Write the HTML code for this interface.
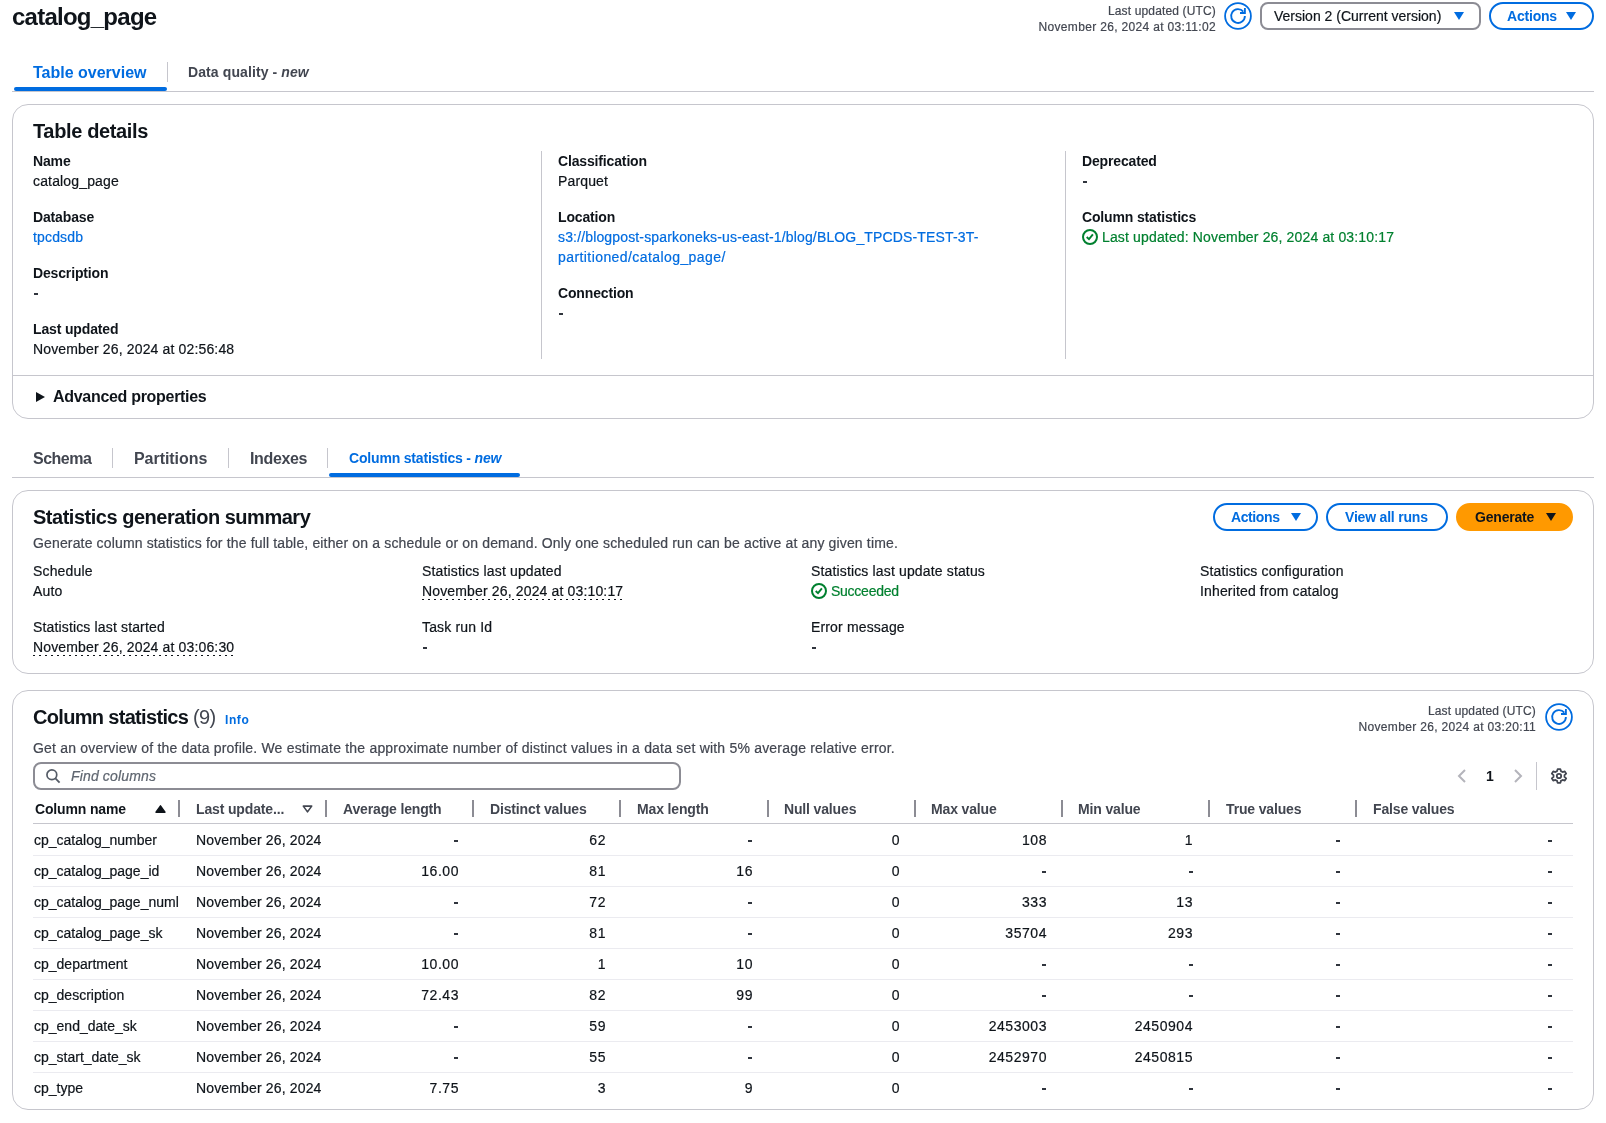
<!DOCTYPE html>
<html><head><meta charset="utf-8">
<style>
*{box-sizing:border-box;margin:0;padding:0}
html,body{width:1606px;height:1123px;overflow:hidden;background:#fff}
body{font-family:"Liberation Sans",sans-serif;color:#0f141a;font-size:14px;line-height:20px;position:relative;letter-spacing:0.15px}
#wrap{position:absolute;left:0;top:0;width:1606px;height:1123px;will-change:transform;-webkit-text-stroke:0.2px currentColor}
.a{position:absolute;white-space:nowrap}
.b{font-weight:bold;letter-spacing:-0.15px;-webkit-text-stroke:0}
.btn,.th{-webkit-text-stroke:0}
.lnk{color:#006ce0}
.grey{color:#424650}
.green{color:#00802f}
.cont{position:absolute;left:12px;width:1582px;border:1px solid #c6c6cd;border-radius:16px;background:#fff}
.vsep{position:absolute;width:1px;background:#c6c6cd}
.hline{position:absolute;height:1px;background:#c6c6cd}
.btn{position:absolute;border:2px solid #006ce0;border-radius:20px;color:#006ce0;font-weight:bold;font-size:14px;line-height:20px;white-space:nowrap;letter-spacing:-0.2px}
.btn span{position:absolute;top:2px}
.tri{position:absolute;width:0;height:0;border-left:5.5px solid transparent;border-right:5.5px solid transparent;border-top:8px solid #006ce0}
.dot{height:20px;background-image:repeating-linear-gradient(90deg,#0f141a 0 2px,transparent 2px 6px);background-size:100% 1px;background-repeat:no-repeat;background-position:0 18px}
.th{position:absolute;top:799px;font-weight:bold;color:#424650;white-space:nowrap;letter-spacing:-0.15px}
.ts{position:absolute;top:800px;width:2px;height:17px;background:#8c8c94}
.rs{position:absolute;left:33px;width:1540px;height:1px;background:#ebebf0}
.r{position:absolute;white-space:nowrap;text-align:right;letter-spacing:0.55px}
.dash{position:absolute;width:4px;height:2px;background:#30353d}
</style></head><body><div id="wrap">

<!-- ================= header ================= -->
<div class="a b" style="left:12px;top:2px;font-size:24px;line-height:30px;letter-spacing:-0.75px">catalog_page</div>
<div class="a grey" style="right:390px;top:3px;font-size:12px;line-height:16px;text-align:right">Last updated (UTC)<br><span style="letter-spacing:0.33px">November 26, 2024 at 03:11:02</span></div>
<svg class="a" style="left:1224px;top:2px" width="28" height="28" viewBox="0 0 28 28">
  <circle cx="14" cy="14" r="12.9" fill="none" stroke="#006ce0" stroke-width="1.8"/>
  <path d="M20.9 14 A6.9 6.9 0 1 1 19.3 9.6" fill="none" stroke="#006ce0" stroke-width="1.85"/>
  <path d="M16 11 H20.9 V6" fill="none" stroke="#006ce0" stroke-width="1.85" stroke-linejoin="miter"/>
</svg>
<div class="a" style="left:1260px;top:2px;width:221px;height:28px;border:2px solid #8c8c94;border-radius:8px"></div>
<div class="a" style="left:1274px;top:6px;letter-spacing:0">Version 2 (Current version)</div>
<div class="tri" style="left:1454px;top:12px"></div>
<div class="btn" style="left:1489px;top:2px;width:105px;height:28px"><span style="left:16px">Actions</span></div>
<div class="tri" style="left:1566px;top:12px"></div>

<!-- ================= tabs 1 ================= -->
<div class="a b lnk" style="left:33px;top:63px;font-size:16px;line-height:20px;letter-spacing:0px">Table overview</div>
<div class="vsep" style="left:167px;top:62px;height:20px"></div>
<div class="a b grey" style="left:188px;top:62px;letter-spacing:0.1px">Data quality - <i>new</i></div>
<div class="hline" style="left:12px;top:91px;width:1582px"></div>
<div class="a" style="left:14px;top:87px;width:153px;height:4px;border-radius:2px;background:#006ce0"></div>

<!-- ================= container 1 ================= -->
<div class="cont" style="top:104px;height:315px"></div>
<div class="a b" style="left:33px;top:119px;font-size:20px;line-height:24px;letter-spacing:-0.36px">Table details</div>

<div class="a b" style="left:33px;top:151px">Name</div>
<div class="a" style="left:33px;top:171px">catalog_page</div>
<div class="a b" style="left:33px;top:207px">Database</div>
<div class="a lnk" style="left:33px;top:227px">tpcdsdb</div>
<div class="a b" style="left:33px;top:263px">Description</div>
<div class="dash" style="left:34px;top:293px"></div>
<div class="a b" style="left:33px;top:319px">Last updated</div>
<div class="a" style="left:33px;top:339px">November 26, 2024 at 02:56:48</div>

<div class="vsep" style="left:541px;top:151px;height:208px"></div>
<div class="a b" style="left:558px;top:151px">Classification</div>
<div class="a" style="left:558px;top:171px">Parquet</div>
<div class="a b" style="left:558px;top:207px">Location</div>
<div class="a lnk" style="left:558px;top:227px">s3://blogpost-sparkoneks-us-east-1/blog/BLOG_TPCDS-TEST-3T-<br><span style="letter-spacing:0.42px">partitioned/catalog_page/</span></div>
<div class="a b" style="left:558px;top:283px">Connection</div>
<div class="dash" style="left:559px;top:313px"></div>

<div class="vsep" style="left:1065px;top:151px;height:208px"></div>
<div class="a b" style="left:1082px;top:151px">Deprecated</div>
<div class="dash" style="left:1083px;top:181px"></div>
<div class="a b" style="left:1082px;top:207px">Column statistics</div>
<svg class="a" style="left:1082px;top:229px" width="16" height="16" viewBox="0 0 16 16">
  <circle cx="8" cy="8" r="7" fill="none" stroke="#00802f" stroke-width="2"/>
  <path d="M4.7 8 L7 10.2 L10.9 5.4" fill="none" stroke="#00802f" stroke-width="1.9"/>
</svg>
<div class="a green" style="left:1102px;top:227px">Last updated: November 26, 2024 at 03:10:17</div>

<div class="hline" style="left:13px;top:375px;width:1580px"></div>
<div class="a" style="left:36px;top:392px;width:0;height:0;border-top:5px solid transparent;border-bottom:5px solid transparent;border-left:9px solid #0f141a"></div>
<div class="a b" style="left:53px;top:387px;font-size:16px;line-height:20px;letter-spacing:-0.3px">Advanced properties</div>

<!-- ================= tabs 2 ================= -->
<div class="a b grey" style="left:33px;top:449px;font-size:16px;line-height:20px;letter-spacing:-0.5px">Schema</div>
<div class="vsep" style="left:112px;top:448px;height:20px"></div>
<div class="a b grey" style="left:134px;top:449px;font-size:16px;line-height:20px;letter-spacing:-0.05px">Partitions</div>
<div class="vsep" style="left:228px;top:448px;height:20px"></div>
<div class="a b grey" style="left:250px;top:449px;font-size:16px;line-height:20px;letter-spacing:-0.37px">Indexes</div>
<div class="vsep" style="left:327px;top:448px;height:20px"></div>
<div class="a b lnk" style="left:349px;top:448px;letter-spacing:-0.18px">Column statistics - <i>new</i></div>
<div class="hline" style="left:12px;top:477px;width:1582px"></div>
<div class="a" style="left:329px;top:473px;width:191px;height:4px;border-radius:2px;background:#006ce0"></div>

<!-- ================= container 2 ================= -->
<div class="cont" style="top:490px;height:184px"></div>
<div class="a b" style="left:33px;top:505px;font-size:20px;line-height:24px;letter-spacing:-0.48px">Statistics generation summary</div>
<div class="a grey" style="left:33px;top:533px">Generate column statistics for the full table, either on a schedule or on demand. Only one scheduled run can be active at any given time.</div>

<div class="btn" style="left:1213px;top:503px;width:105px;height:28px"><span style="left:16px;letter-spacing:-0.4px">Actions</span></div>
<div class="tri" style="left:1291px;top:513px"></div>
<div class="btn" style="left:1326px;top:503px;width:122px;height:28px"><span style="left:17px">View all runs</span></div>
<div class="btn" style="left:1456px;top:503px;width:117px;height:28px;background:#ff9900;border-color:#ff9900;color:#0f141a"><span style="left:17px">Generate</span></div>
<div class="tri" style="left:1546px;top:513px;border-top-color:#0f141a"></div>

<div class="a" style="left:33px;top:561px">Schedule</div>
<div class="a" style="left:33px;top:581px">Auto</div>
<div class="a" style="left:33px;top:617px">Statistics last started</div>
<div class="a dot" style="left:33px;top:637px">November 26, 2024 at 03:06:30</div>

<div class="a" style="left:422px;top:561px">Statistics last updated</div>
<div class="a dot" style="left:422px;top:581px">November 26, 2024 at 03:10:17</div>
<div class="a" style="left:422px;top:617px">Task run Id</div>
<div class="dash" style="left:423px;top:647px"></div>

<div class="a" style="left:811px;top:561px">Statistics last update status</div>
<svg class="a" style="left:811px;top:583px" width="16" height="16" viewBox="0 0 16 16">
  <circle cx="8" cy="8" r="7" fill="none" stroke="#00802f" stroke-width="2"/>
  <path d="M4.7 8 L7 10.2 L10.9 5.4" fill="none" stroke="#00802f" stroke-width="1.9"/>
</svg>
<div class="a green" style="left:831px;top:581px;letter-spacing:-0.25px">Succeeded</div>
<div class="a" style="left:811px;top:617px">Error message</div>
<div class="dash" style="left:812px;top:647px"></div>

<div class="a" style="left:1200px;top:561px">Statistics configuration</div>
<div class="a" style="left:1200px;top:581px">Inherited from catalog</div>

<!-- ================= container 3 ================= -->
<div class="cont" style="top:690px;height:420px"></div>
<div class="a b" style="left:33px;top:705px;font-size:20px;line-height:24px;letter-spacing:-0.68px">Column statistics <span class="grey" style="font-weight:normal">(9)</span></div>
<div class="a b lnk" style="left:225px;top:712px;font-size:12px;line-height:16px;letter-spacing:0.6px">Info</div>
<div class="a grey" style="right:70px;top:703px;font-size:12px;line-height:16px;text-align:right">Last updated (UTC)<br><span style="letter-spacing:0.33px">November 26, 2024 at 03:20:11</span></div>
<svg class="a" style="left:1545px;top:703px" width="28" height="28" viewBox="0 0 28 28">
  <circle cx="14" cy="14" r="12.9" fill="none" stroke="#006ce0" stroke-width="1.8"/>
  <path d="M20.9 14 A6.9 6.9 0 1 1 19.3 9.6" fill="none" stroke="#006ce0" stroke-width="1.85"/>
  <path d="M16 11 H20.9 V6" fill="none" stroke="#006ce0" stroke-width="1.85" stroke-linejoin="miter"/>
</svg>
<div class="a grey" style="left:33px;top:738px;letter-spacing:0.2px">Get an overview of the data profile. We estimate the approximate number of distinct values in a data set with 5% average relative error.</div>

<div class="a" style="left:33px;top:762px;width:648px;height:28px;border:2px solid #8c8c94;border-radius:8px"></div>
<svg class="a" style="left:45px;top:769px" width="16" height="16" viewBox="0 0 16 16">
  <circle cx="6.85" cy="5.8" r="4.9" fill="none" stroke="#545b66" stroke-width="1.7"/>
  <path d="M10.4 9.4 L14.6 13.6" stroke="#545b66" stroke-width="1.8"/>
</svg>
<div class="a" style="left:71px;top:766px;font-style:italic;color:#5f6670">Find columns</div>

<svg class="a" style="left:1456px;top:768px" width="12" height="16" viewBox="0 0 12 16">
  <path d="M9 2 L3 8 L9 14" fill="none" stroke="#b4b4bb" stroke-width="2"/>
</svg>
<div class="a b" style="left:1486px;top:766px">1</div>
<svg class="a" style="left:1512px;top:768px" width="12" height="16" viewBox="0 0 12 16">
  <path d="M3 2 L9 8 L3 14" fill="none" stroke="#b4b4bb" stroke-width="2"/>
</svg>
<div class="vsep" style="left:1536px;top:762px;height:28px"></div>
<svg class="a" style="left:1550px;top:767px" width="18" height="18" viewBox="0 0 18 18">
  <path d="M7.6 2.1 h2.8 l0.5 2.02 l1.7 0.92 l2.2 -0.64 l1.4 2.21 l-1.7 1.47 v1.84 l1.7 1.47 l-1.4 2.21 l-2.2 -0.64 l-1.7 0.92 l-0.5 2.02 h-2.8 l-0.5 -2.02 l-1.7 -0.92 l-2.2 0.64 l-1.4 -2.21 l1.7 -1.47 v-1.84 l-1.7 -1.47 l1.4 -2.21 l2.2 0.64 l1.7 -0.92 z" fill="none" stroke="#424650" stroke-width="1.8" stroke-linejoin="round"/>
  <circle cx="9" cy="9" r="2.2" fill="none" stroke="#424650" stroke-width="1.8"/>
</svg>

<!-- table header -->
<div class="th" style="left:35px;color:#0f141a">Column name</div>
<svg class="a" style="left:154px;top:804px" width="13" height="10" viewBox="0 0 13 10"><path d="M2 8.2 L6.5 1.8 L11 8.2 Z" fill="#0f141a" stroke="#0f141a" stroke-width="1.4" stroke-linejoin="round"/></svg>
<div class="ts" style="left:178px"></div>
<div class="th" style="left:196px">Last update...</div>
<svg class="a" style="left:302px;top:805px" width="11" height="9" viewBox="0 0 11 9"><path d="M1.3 1.1 H9.7 L5.5 6.9 Z" fill="none" stroke="#424650" stroke-width="1.6" stroke-linejoin="round"/></svg>
<div class="ts" style="left:325px"></div>
<div class="th" style="left:343px">Average length</div>
<div class="ts" style="left:472px"></div>
<div class="th" style="left:490px">Distinct values</div>
<div class="ts" style="left:619px"></div>
<div class="th" style="left:637px">Max length</div>
<div class="ts" style="left:767px"></div>
<div class="th" style="left:784px">Null values</div>
<div class="ts" style="left:914px"></div>
<div class="th" style="left:931px">Max value</div>
<div class="ts" style="left:1061px"></div>
<div class="th" style="left:1078px">Min value</div>
<div class="ts" style="left:1208px"></div>
<div class="th" style="left:1226px">True values</div>
<div class="ts" style="left:1355px"></div>
<div class="th" style="left:1373px">False values</div>
<div class="a" style="left:33px;top:823px;width:1540px;height:1px;background:#c6c6cd"></div>

<div id="rows">
<div class="a" style="left:34px;top:830px;width:146px;overflow:hidden;letter-spacing:0">cp_catalog_number</div>
<div class="a" style="left:196px;top:830px">November 26, 2024</div>
<div class="dash" style="left:454px;top:840px"></div>
<div class="r" style="right:1000px;top:830px">62</div>
<div class="dash" style="left:748px;top:840px"></div>
<div class="r" style="right:706px;top:830px">0</div>
<div class="r" style="right:559px;top:830px">108</div>
<div class="r" style="right:413px;top:830px">1</div>
<div class="dash" style="left:1336px;top:840px"></div>
<div class="dash" style="left:1548px;top:840px"></div>
<div class="rs" style="top:855px"></div>
<div class="a" style="left:34px;top:861px;width:146px;overflow:hidden;letter-spacing:0">cp_catalog_page_id</div>
<div class="a" style="left:196px;top:861px">November 26, 2024</div>
<div class="r" style="right:1147px;top:861px">16.00</div>
<div class="r" style="right:1000px;top:861px">81</div>
<div class="r" style="right:853px;top:861px">16</div>
<div class="r" style="right:706px;top:861px">0</div>
<div class="dash" style="left:1042px;top:871px"></div>
<div class="dash" style="left:1189px;top:871px"></div>
<div class="dash" style="left:1336px;top:871px"></div>
<div class="dash" style="left:1548px;top:871px"></div>
<div class="rs" style="top:886px"></div>
<div class="a" style="left:34px;top:892px;width:146px;overflow:hidden;letter-spacing:0">cp_catalog_page_numl</div>
<div class="a" style="left:196px;top:892px">November 26, 2024</div>
<div class="dash" style="left:454px;top:902px"></div>
<div class="r" style="right:1000px;top:892px">72</div>
<div class="dash" style="left:748px;top:902px"></div>
<div class="r" style="right:706px;top:892px">0</div>
<div class="r" style="right:559px;top:892px">333</div>
<div class="r" style="right:413px;top:892px">13</div>
<div class="dash" style="left:1336px;top:902px"></div>
<div class="dash" style="left:1548px;top:902px"></div>
<div class="rs" style="top:917px"></div>
<div class="a" style="left:34px;top:923px;width:146px;overflow:hidden;letter-spacing:0">cp_catalog_page_sk</div>
<div class="a" style="left:196px;top:923px">November 26, 2024</div>
<div class="dash" style="left:454px;top:933px"></div>
<div class="r" style="right:1000px;top:923px">81</div>
<div class="dash" style="left:748px;top:933px"></div>
<div class="r" style="right:706px;top:923px">0</div>
<div class="r" style="right:559px;top:923px">35704</div>
<div class="r" style="right:413px;top:923px">293</div>
<div class="dash" style="left:1336px;top:933px"></div>
<div class="dash" style="left:1548px;top:933px"></div>
<div class="rs" style="top:948px"></div>
<div class="a" style="left:34px;top:954px;width:146px;overflow:hidden;letter-spacing:0">cp_department</div>
<div class="a" style="left:196px;top:954px">November 26, 2024</div>
<div class="r" style="right:1147px;top:954px">10.00</div>
<div class="r" style="right:1000px;top:954px">1</div>
<div class="r" style="right:853px;top:954px">10</div>
<div class="r" style="right:706px;top:954px">0</div>
<div class="dash" style="left:1042px;top:964px"></div>
<div class="dash" style="left:1189px;top:964px"></div>
<div class="dash" style="left:1336px;top:964px"></div>
<div class="dash" style="left:1548px;top:964px"></div>
<div class="rs" style="top:979px"></div>
<div class="a" style="left:34px;top:985px;width:146px;overflow:hidden;letter-spacing:0">cp_description</div>
<div class="a" style="left:196px;top:985px">November 26, 2024</div>
<div class="r" style="right:1147px;top:985px">72.43</div>
<div class="r" style="right:1000px;top:985px">82</div>
<div class="r" style="right:853px;top:985px">99</div>
<div class="r" style="right:706px;top:985px">0</div>
<div class="dash" style="left:1042px;top:995px"></div>
<div class="dash" style="left:1189px;top:995px"></div>
<div class="dash" style="left:1336px;top:995px"></div>
<div class="dash" style="left:1548px;top:995px"></div>
<div class="rs" style="top:1010px"></div>
<div class="a" style="left:34px;top:1016px;width:146px;overflow:hidden;letter-spacing:0">cp_end_date_sk</div>
<div class="a" style="left:196px;top:1016px">November 26, 2024</div>
<div class="dash" style="left:454px;top:1026px"></div>
<div class="r" style="right:1000px;top:1016px">59</div>
<div class="dash" style="left:748px;top:1026px"></div>
<div class="r" style="right:706px;top:1016px">0</div>
<div class="r" style="right:559px;top:1016px">2453003</div>
<div class="r" style="right:413px;top:1016px">2450904</div>
<div class="dash" style="left:1336px;top:1026px"></div>
<div class="dash" style="left:1548px;top:1026px"></div>
<div class="rs" style="top:1041px"></div>
<div class="a" style="left:34px;top:1047px;width:146px;overflow:hidden;letter-spacing:0">cp_start_date_sk</div>
<div class="a" style="left:196px;top:1047px">November 26, 2024</div>
<div class="dash" style="left:454px;top:1057px"></div>
<div class="r" style="right:1000px;top:1047px">55</div>
<div class="dash" style="left:748px;top:1057px"></div>
<div class="r" style="right:706px;top:1047px">0</div>
<div class="r" style="right:559px;top:1047px">2452970</div>
<div class="r" style="right:413px;top:1047px">2450815</div>
<div class="dash" style="left:1336px;top:1057px"></div>
<div class="dash" style="left:1548px;top:1057px"></div>
<div class="rs" style="top:1072px"></div>
<div class="a" style="left:34px;top:1078px;width:146px;overflow:hidden;letter-spacing:0">cp_type</div>
<div class="a" style="left:196px;top:1078px">November 26, 2024</div>
<div class="r" style="right:1147px;top:1078px">7.75</div>
<div class="r" style="right:1000px;top:1078px">3</div>
<div class="r" style="right:853px;top:1078px">9</div>
<div class="r" style="right:706px;top:1078px">0</div>
<div class="dash" style="left:1042px;top:1088px"></div>
<div class="dash" style="left:1189px;top:1088px"></div>
<div class="dash" style="left:1336px;top:1088px"></div>
<div class="dash" style="left:1548px;top:1088px"></div>
</div>
</body></html>
